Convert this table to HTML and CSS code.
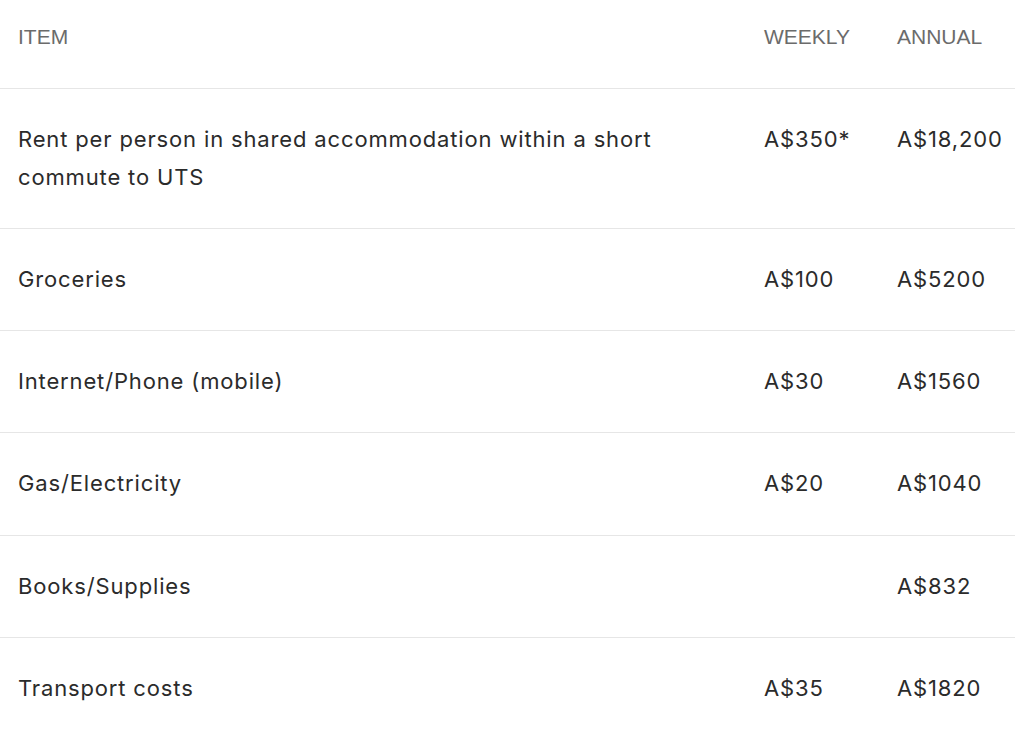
FILE: index.html
```html
<!DOCTYPE html>
<html>
<head>
<meta charset="utf-8">
<link rel="stylesheet" href="styles.css">
</head>
<body>
<table class="costs">
  <thead>
    <tr><th class="c-item">ITEM</th><th class="c-week">WEEKLY</th><th class="c-year">ANNUAL</th></tr>
  </thead>
  <tbody>
    <tr><td>Rent per person in shared accommodation within a short commute to UTS</td><td>A$350*</td><td>A$18,200</td></tr>
    <tr><td>Groceries</td><td>A$100</td><td>A$5200</td></tr>
    <tr><td>Internet/Phone (mobile)</td><td>A$30</td><td>A$1560</td></tr>
    <tr><td>Gas/Electricity</td><td>A$20</td><td>A$1040</td></tr>
    <tr><td>Books/Supplies</td><td></td><td>A$832</td></tr>
    <tr><td>Transport costs</td><td>A$35</td><td>A$1820</td></tr>
  </tbody>
</table>
</body>
</html>
```
FILE: styles.css
```css
html, body { margin: 0; padding: 0; background: #fff; }
.costs {
  width: 1015px;
  border-collapse: collapse;
  table-layout: fixed;
}
.costs th {
  font-family: "Liberation Sans", Arial, sans-serif;
  font-size: 21px;
  font-weight: normal;
  color: #6b6b6b;
  text-align: left;
  line-height: 24px;
  padding: 25px 18px 39px;
  border-bottom: 1px solid #e6e6e6;
}
.c-item { width: auto; }
.c-week { width: 97px; }
.c-year { width: 100px; }
.costs td {
  font-family: Inter, "Noto Sans", sans-serif;
  font-size: 22px;
  letter-spacing: 0.85px;
  color: #2b2b2b;
  line-height: 38px;
  padding: 31px 18px 32px;
  vertical-align: top;
  border-bottom: 1px solid #e6e6e6;
}
.costs tbody tr:nth-child(4) td { padding-bottom: 33px; }
.costs tbody tr:last-child td { border-bottom: none; }
```
